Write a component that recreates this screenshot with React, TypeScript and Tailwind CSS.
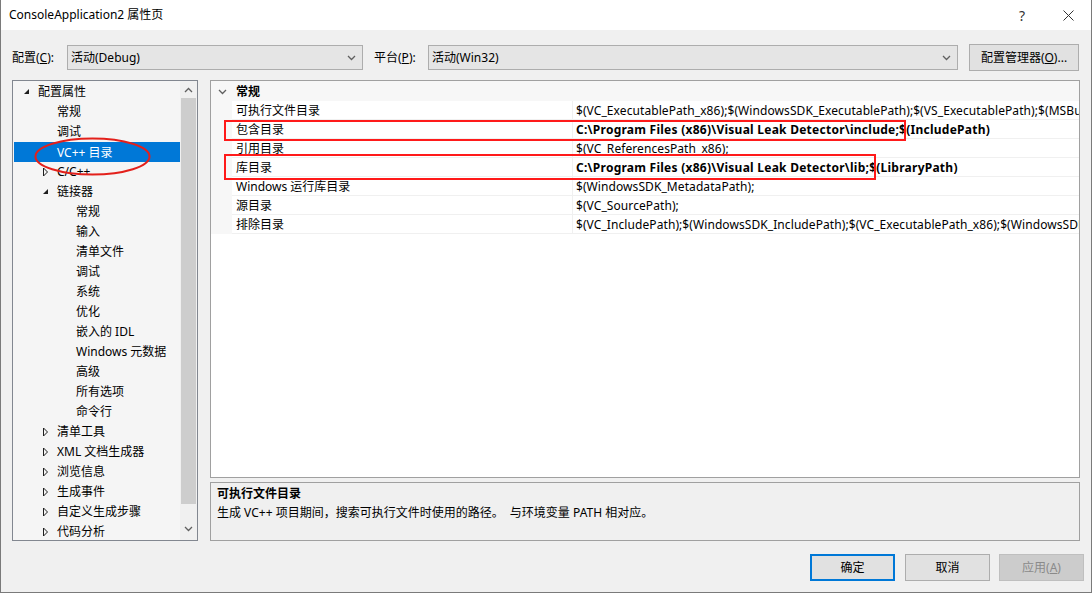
import React from 'react';

type TreeItem = {
  label: string;
  level: 0 | 1 | 2;
  arrow?: 'open' | 'closed';
  selected?: boolean;
};

const treeItems: TreeItem[] = [
  { label: '配置属性', level: 0, arrow: 'open' },
  { label: '常规', level: 1 },
  { label: '调试', level: 1 },
  { label: 'VC++ 目录', level: 1, selected: true },
  { label: 'C/C++', level: 1, arrow: 'closed' },
  { label: '链接器', level: 1, arrow: 'open' },
  { label: '常规', level: 2 },
  { label: '输入', level: 2 },
  { label: '清单文件', level: 2 },
  { label: '调试', level: 2 },
  { label: '系统', level: 2 },
  { label: '优化', level: 2 },
  { label: '嵌入的 IDL', level: 2 },
  { label: 'Windows 元数据', level: 2 },
  { label: '高级', level: 2 },
  { label: '所有选项', level: 2 },
  { label: '命令行', level: 2 },
  { label: '清单工具', level: 1, arrow: 'closed' },
  { label: 'XML 文档生成器', level: 1, arrow: 'closed' },
  { label: '浏览信息', level: 1, arrow: 'closed' },
  { label: '生成事件', level: 1, arrow: 'closed' },
  { label: '自定义生成步骤', level: 1, arrow: 'closed' },
  { label: '代码分析', level: 1, arrow: 'closed' },
];

const props = [
  { name: '可执行文件目录', value: '$(VC_ExecutablePath_x86);$(WindowsSDK_ExecutablePath);$(VS_ExecutablePath);$(MSBuild_ExecutablePath);$(FxCopDir);$(PATH);' },
  { name: '包含目录', value: 'C:\\Program Files (x86)\\Visual Leak Detector\\include;$(IncludePath)', bold: true },
  { name: '引用目录', value: '$(VC_ReferencesPath_x86);' },
  { name: '库目录', value: 'C:\\Program Files (x86)\\Visual Leak Detector\\lib;$(LibraryPath)', bold: true },
  { name: 'Windows 运行库目录', value: '$(WindowsSDK_MetadataPath);' },
  { name: '源目录', value: '$(VC_SourcePath);' },
  { name: '排除目录', value: '$(VC_IncludePath);$(WindowsSDK_IncludePath);$(VC_ExecutablePath_x86);$(WindowsSDK_ExecutablePath);' },
];

const indent = {
  0: 'pl-[9px]',
  1: 'pl-[28px]',
  2: 'pl-[47px]',
};

function Chevron({ up }: { up?: boolean }) {
  return (
    <svg width="9" height="6" viewBox="0 0 9 6">
      <path d={up ? 'M1 5 L4.5 1.5 L8 5' : 'M1 1 L4.5 4.5 L8 1'} fill="none" stroke="#606060" strokeWidth="1.3" />
    </svg>
  );
}

function Arrow({ kind }: { kind: 'open' | 'closed' }) {
  if (kind === 'open') {
    return (
      <svg width="7" height="7" viewBox="0 0 7 7" className="ml-[1px]">
        <path d="M6 1 L6 6 L1 6 Z" fill="#1e1e1e" />
      </svg>
    );
  }
  return (
    <svg width="7" height="10" viewBox="0 0 7 10" className="ml-[1px]">
      <path d="M1.5 1 L5.5 5 L1.5 9 Z" fill="none" stroke="#1e1e1e" strokeWidth="1" />
    </svg>
  );
}

function ComboBox({ text, width }: { text: string; width: string }) {
  return (
    <div className={`${width} h-[25px] bg-[#e5e5e5] border border-[#adadad] flex items-center pl-[3px] pr-[6px]`}>
      <span className="flex-1">{text}</span>
      <Chevron />
    </div>
  );
}

export default function App() {
  return (
    <div className="w-[1092px] h-[593px] bg-[#f0f0f0] border-l border-r border-b border-[#7a7a7a] flex flex-col text-[12px] text-black font-['Noto_Sans','Noto_Sans_CJK_SC',sans-serif] overflow-hidden">
      {/* title bar */}
      <div className="h-[30px] bg-white flex items-center shrink-0">
        <span className="pl-[8px] flex-1">ConsoleApplication2 属性页</span>
        <div className="w-[46px] h-full flex items-center justify-center text-[14px] text-[#333]">?</div>
        <div className="w-[46px] h-full flex items-center justify-center">
          <svg width="11" height="11" viewBox="0 0 11 11">
            <path d="M0.5 0.5 L10.5 10.5 M10.5 0.5 L0.5 10.5" stroke="#333" strokeWidth="1" />
          </svg>
        </div>
      </div>

      {/* config row */}
      <div className="flex items-center h-[27px] mt-[14px] pl-[11px] shrink-0">
        <span className="w-[55px]">配置(<span className="underline">C</span>):</span>
        <ComboBox text="活动(Debug)" width="w-[296px]" />
        <span className="w-[54px] ml-[11px]">平台(<span className="underline">P</span>):</span>
        <ComboBox text="活动(Win32)" width="w-[530px]" />
        <button className="ml-[11px] w-[110px] h-[27px] bg-[#e1e1e1] border border-[#adadad] flex items-center justify-center">
          配置管理器(<span className="underline">O</span>)...
        </button>
      </div>

      {/* main */}
      <div className="flex mt-[9px] pl-[11px] shrink-0">
        {/* tree */}
        <div className="relative w-[186px] h-[461px] border border-[#828790] bg-[#f5f5f5] flex overflow-hidden">
          <div className="flex-1 flex flex-col">
            {treeItems.map((item, i) => (
              <div
                key={i}
                className={`h-[20px] shrink-0 flex items-center pt-[1px] ${indent[item.level]} ${
                  item.selected ? 'bg-[#0078d7] text-white ml-[1px] mt-[1px] -mb-[1px]' : ''
                }`}
              >
                <span className={`w-[16px] flex items-center ${item.selected ? '-ml-[1px]' : ''}`}>
                  {item.arrow && <Arrow kind={item.arrow} />}
                </span>
                <span className="whitespace-nowrap">{item.label}</span>
              </div>
            ))}
          </div>
          <div className="w-[17px] flex flex-col bg-[#f0f0f0]">
            <div className="h-[17px] flex items-center justify-center">
              <Chevron up />
            </div>
            <div className="h-[406px] mx-[1px] bg-[#cdcdcd]" />
            <div className="flex-1 flex items-end justify-center pb-[8px]">
              <Chevron />
            </div>
          </div>
          <svg className="absolute left-[21px] top-[56px]" width="117" height="39" viewBox="0 0 117 39">
            <ellipse cx="58.5" cy="19.5" rx="57" ry="18" fill="none" stroke="#e3201b" strokeWidth="2" />
          </svg>
        </div>

        {/* right column */}
        <div className="ml-[12px] w-[870px] flex flex-col">
          <div className="relative h-[398px] border border-[#a0a0a0] bg-white overflow-hidden">
            <div className="h-[20px] bg-[#f7f7f7] flex items-center pt-[1px]">
              <span className="w-[21px] flex justify-center pl-[2px]">
                <Chevron />
              </span>
              <span className="pl-[4px] font-bold">常规</span>
            </div>
            {props.map((p) => (
              <div key={p.name} className="h-[19px] flex">
                <div className="w-[21px] bg-[#f7f7f7] shrink-0" />
                <div className="w-[341px] shrink-0 border-b border-r border-[#f0f0f0] flex items-center pt-[1px] pl-[4px] whitespace-nowrap">
                  {p.name}
                </div>
                <div
                  className={`flex-1 border-b border-[#f0f0f0] flex items-center pt-[1px] pl-[3px] whitespace-nowrap overflow-hidden ${
                    p.bold ? 'font-bold tracking-[0.25px]' : 'tracking-[0.08px]'
                  }`}
                >
                  {p.value}
                </div>
              </div>
            ))}
            <div className="absolute left-[13px] top-[39px] w-[682px] h-[21px] border-2 border-[#ff1a1a]" />
            <div className="absolute left-[13px] top-[73px] w-[652px] h-[26px] border-2 border-[#ff1a1a]" />
          </div>
          <div className="mt-[4px] h-[59px] border border-[#a0a0a0] bg-[#f0f0f0] pl-[6px] pt-[1px] leading-[19px]">
            <div className="font-bold">可执行文件目录</div>
            <div>生成 VC++ 项目期间，搜索可执行文件时使用的路径。&nbsp;&nbsp;与环境变量 PATH 相对应。</div>
          </div>
        </div>
      </div>

      {/* buttons */}
      <div className="flex justify-end mt-[13px] pr-[7px]">
        <button className="w-[85px] h-[27px] bg-[#e1e1e1] border-2 border-[#0078d7]">确定</button>
        <button className="ml-[10px] w-[85px] h-[27px] bg-[#e1e1e1] border border-[#adadad]">取消</button>
        <button className="ml-[9px] w-[85px] h-[27px] bg-[#cccccc] border border-[#bfbfbf] text-[#8a8a8a]">
          应用(<span className="underline">A</span>)
        </button>
      </div>
    </div>
  );
}
